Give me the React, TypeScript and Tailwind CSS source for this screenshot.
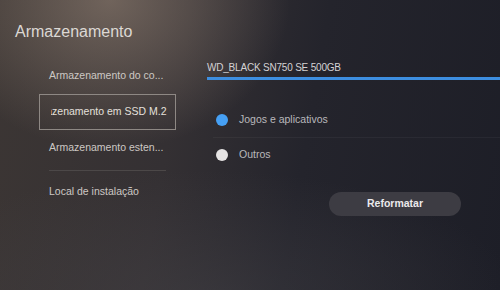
const menu = [
  { label: "Armazenamento do co...", selected: false },
  { label: "Armazenamento em SSD M.2", selected: true },
  { label: "Armazenamento esten...", selected: false },
];

export default function App() {
  return (
    <div className="relative w-[500px] h-[290px] overflow-hidden font-['Liberation_Sans',Arial,sans-serif] bg-[linear-gradient(100deg,#3c3634_0%,#343033_35%,#24242c_60%,#1d1e27_100%)]">
      {/* soft warm glow top-left */}
      <div className="pointer-events-none absolute inset-0 bg-[radial-gradient(ellipse_180px_150px_at_110px_0px,rgba(150,132,118,0.6),rgba(150,132,118,0)_100%)]" />
      <div className="pointer-events-none absolute inset-0 bg-[radial-gradient(ellipse_320px_130px_at_200px_300px,rgba(72,70,74,0.45),rgba(72,70,74,0)_100%)]" />

      <div className="relative">
        {/* Title */}
        <h1 className="pt-[22px] pl-[15px] text-[16px] leading-[20px] text-[#dcd8d4]">
          Armazenamento
        </h1>

        <div className="mt-[16px] flex">
          {/* Left menu */}
          <div className="ml-[39px] w-[137px] text-[10.5px] text-[#cdc8c4]">
            {menu.map((m) =>
              m.selected ? (
                <div
                  key={m.label}
                  className="h-[36px] flex items-center border-[1.5px] border-[#8e8884] pl-[11px] pr-[8px]"
                >
                  <div className="overflow-hidden whitespace-nowrap flex-1">
                    <span className="inline-block -translate-x-[24px] text-[#e4e0dc]">
                      {m.label}
                    </span>
                  </div>
                </div>
              ) : (
                <div key={m.label} className="h-[36px] flex items-center pl-[10px] whitespace-nowrap">
                  {m.label}
                </div>
              )
            )}
            <div className="mt-[4px] ml-[10px] w-[117px] h-px bg-[#4c4848]" />
            <div className="mt-[3px] h-[36px] flex items-center pl-[10px]">Local de instalação</div>
          </div>

          {/* Right panel */}
          <div className="ml-[31px] flex-1">
            <div className="h-[18px] flex items-center text-[10px] tracking-[-0.2px] text-[#d4d2d4]">
              WD_BLACK SN750 SE 500GB
            </div>
            <div className="mt-[1px] h-[3px] bg-[#3d8ee0]" />

            <div className="mt-[23px] h-[34px] flex items-center pl-[9px] text-[10.5px] text-[#b9b8bc]">
              <span className="w-[12px] h-[12px] rounded-full bg-[#46a0f4]" />
              <span className="ml-[11px]">Jogos e aplicativos</span>
            </div>
            <div className="ml-[6px] h-px bg-white/[0.045]" />
            <div className="h-[34px] flex items-center pl-[9px] text-[10.5px] text-[#b9b8bc]">
              <span className="w-[12px] h-[12px] rounded-full bg-[#e6e4e4]" />
              <span className="ml-[11px]">Outros</span>
            </div>

            <button className="mt-[20px] ml-[122px] w-[132px] h-[24px] rounded-full bg-[#3d3c43] text-[10.5px] font-bold text-[#ebeaec]">
              Reformatar
            </button>
          </div>
        </div>
      </div>
    </div>
  );
}
